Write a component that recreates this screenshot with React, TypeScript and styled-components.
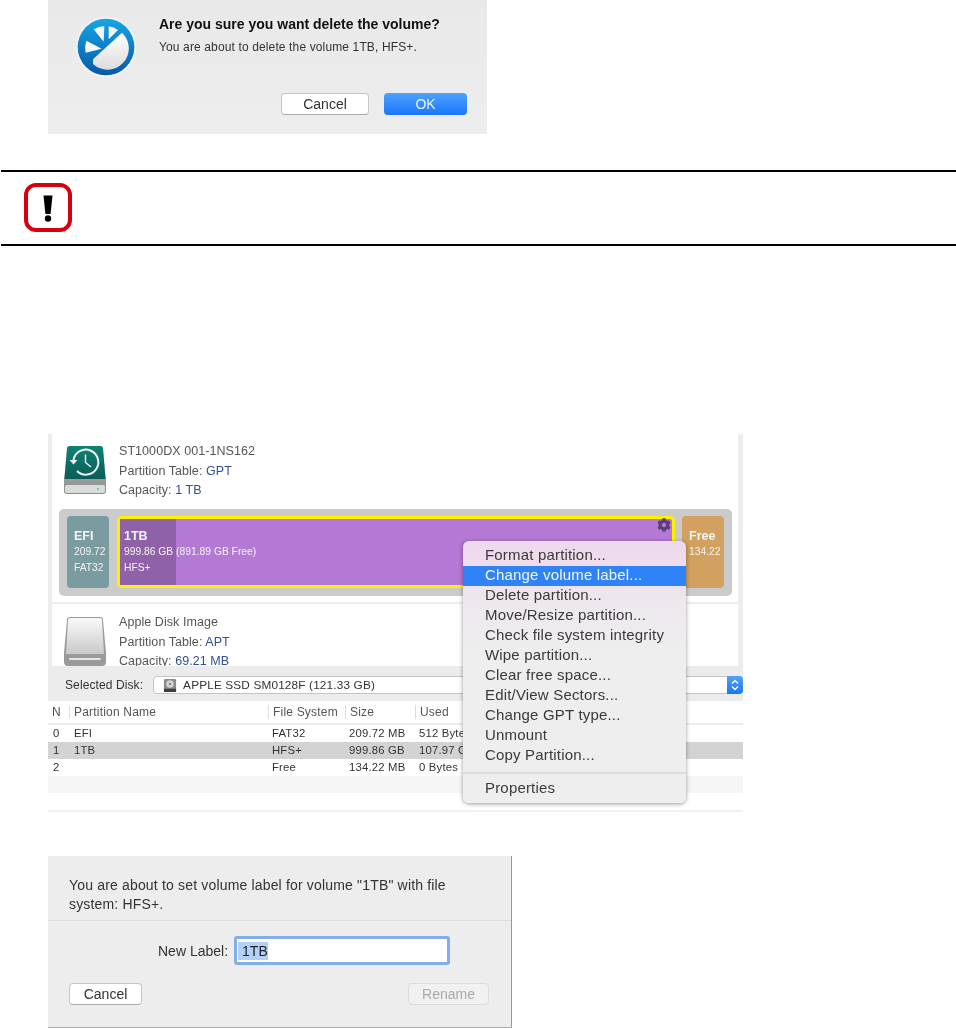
import React from "react";
import styled, { createGlobalStyle } from "styled-components";
import { FaCog } from "react-icons/fa";

const Global = createGlobalStyle`
  html, body { margin: 0; padding: 0; background: #fff; }
  body { font-family: "Liberation Sans", Arial, sans-serif; color: #222; }
`;

const soft = `filter: blur(0.35px);`;

const Page = styled.div`
  width: 956px;
  height: 1028px;
  overflow: hidden;
  background: #fff;
`;

const ConfirmDialog = styled.section`
  ${soft}
  margin-left: 48px;
  width: 439px;
  height: 134px;
  box-sizing: border-box;
  padding: 16px 20px 0 27px;
  background: linear-gradient(#e9e9e9, #ededed);
  display: flex;
  gap: 22px;
`;
const LogoSvg = styled.svg`
  width: 62px;
  height: 62px;
  flex: none;
`;
const ConfirmBody = styled.div`
  flex: 1;
  display: flex;
  flex-direction: column;
`;
const ConfirmTitle = styled.div`
  font-size: 14px;
  font-weight: 700;
  line-height: 16px;
  color: #111;
`;
const ConfirmText = styled.div`
  font-size: 12px;
  line-height: 14px;
  color: #333;
  margin-top: 8px;
  letter-spacing: 0.13px;
`;
const ButtonRow = styled.div`
  display: flex;
  justify-content: flex-end;
  gap: 15px;
  margin-top: 39px;
`;
const MacButton = styled.div<{ $w: number; $kind?: "primary" | "disabled" }>`
  width: ${(p) => p.$w}px;
  height: 22px;
  box-sizing: border-box;
  border-radius: 4px;
  display: flex;
  align-items: center;
  justify-content: center;
  font-size: 14px;
  ${(p) =>
    p.$kind === "primary"
      ? `background: linear-gradient(#4fa2fd, #1a76fb); color: #eaf3ff;`
      : p.$kind === "disabled"
      ? `background: #f1f1f1; color: #a9a9a9; border: 1px solid #dcdcdc;`
      : `background: #fff; color: #333; border: 1px solid #c6c6c6; border-bottom-color: #aaa;`}
`;

const Notice = styled.section`
  margin: 36px 0 0 1px;
  height: 76px;
  box-sizing: border-box;
  border-top: 2px solid #000;
  border-bottom: 2px solid #000;
  padding: 11px 0 0 23px;
`;
const WarningBox = styled.div`
  width: 48px;
  height: 49px;
  box-sizing: border-box;
  border: 4px solid #d8000f;
  border-radius: 12px;
  background: #fff;
  display: flex;
  align-items: center;
  justify-content: center;
`;

const Manager = styled.section`
  ${soft}
  position: relative;
  margin: 188px 0 0 48px;
  width: 695px;
  height: 378px;
  background: #ececec;
`;
const DiskArea = styled.div`
  height: 232px;
  box-sizing: border-box;
  padding: 0 5px 0 4px;
  background: #ededed;
  display: flex;
  flex-direction: column;
  gap: 2px;
  overflow: hidden;
`;
const DiskCard = styled.div<{ $h: number; $top: number }>`
  flex: none;
  height: ${(p) => p.$h}px;
  box-sizing: border-box;
  background: #fff;
  padding-top: ${(p) => p.$top}px;
  overflow: hidden;
`;
const DiskHead = styled.div`
  height: 67px;
  display: flex;
  gap: 12px;
  padding-left: 11px;
`;
const DiskIcon = styled.svg`
  width: 44px;
  height: 50px;
  flex: none;
  margin-top: 4px;
`;
const DiskInfo = styled.div`
  font-size: 12.5px;
  line-height: 19.5px;
  letter-spacing: 0.06px;
  color: #555;
`;
const Accent = styled.span`
  color: #35508f;
`;
const PartitionBar = styled.div`
  margin: 0 6px 0 7px;
  height: 87px;
  box-sizing: border-box;
  padding: 7px 8px 8px;
  background: #cbcbcb;
  border-radius: 5px;
  display: flex;
  gap: 8px;
`;
const Partition = styled.div<{ $w: number; $c: string }>`
  position: relative;
  flex: none;
  width: ${(p) => p.$w}px;
  height: 72px;
  box-sizing: border-box;
  background: ${(p) => p.$c};
  border-radius: 4px;
  padding: 12px 0 0 7px;
  color: #f4f4f4;
  overflow: hidden;
`;
const VolumeFrame = styled.div`
  position: relative;
  flex: none;
  width: 558px;
  height: 72px;
  box-sizing: border-box;
  border: 3px solid #fff000;
  border-radius: 5px;
  background: #b478d5;
  color: #f4f4f4;
  display: flex;
  margin-right: -1px;
`;
const UsedPart = styled.div`
  width: 56px;
  box-sizing: border-box;
  background: #8f61a9;
  padding: 9px 0 0 4px;
  white-space: nowrap;
`;
const PartName = styled.div`
  font-size: 12.5px;
  font-weight: 700;
  line-height: 16px;
`;
const PartMeta = styled.div`
  font-size: 10.3px;
  line-height: 16px;
  white-space: nowrap;
`;
const Gear = styled(FaCog)`
  position: absolute;
  top: -1px;
  right: 1px;
  width: 14px;
  height: 14px;
  color: #5b3d78;
`;

const Toolbar = styled.div`
  height: 35px;
  box-sizing: border-box;
  padding: 10px 0 0 17px;
  background: #ececec;
  display: flex;
  gap: 10px;
  font-size: 12px;
  color: #333;
`;
const ToolbarLabel = styled.span`
  line-height: 18px;
  letter-spacing: 0.1px;
`;
const Select = styled.div`
  flex: 1;
  height: 18px;
  box-sizing: border-box;
  background: #fff;
  border: 1px solid #c4c4c4;
  border-radius: 4px;
  display: flex;
  align-items: center;
  gap: 6px;
  padding-left: 9px;
  font-size: 11.8px;
  letter-spacing: 0.15px;
  color: #333;
`;
const SmallDisk = styled.svg`
  width: 14px;
  height: 15px;
  flex: none;
`;
const Stepper = styled.div`
  margin-left: auto;
  width: 16px;
  height: 18px;
  margin-right: -1px;
  border-radius: 0 4px 4px 0;
  background: linear-gradient(#4fa2fd, #1a76fb);
  display: flex;
  align-items: center;
  justify-content: center;
`;

const TableWrap = styled.div`
  background: #fff;
`;
const colGrid = `display: grid; grid-template-columns: 21px 199px 77px 70px 1fr;`;
const TableHead = styled.div`
  ${colGrid}
  height: 24px;
  box-sizing: border-box;
  background: #fff;
  border-bottom: 2px solid #ececec;
  font-size: 12px;
  letter-spacing: 0.2px;
  color: #555;
  align-items: center;
`;
const HeadCell = styled.div<{ $first?: boolean }>`
  height: 14px;
  line-height: 14px;
  padding-left: 4px;
  border-left: ${(p) => (p.$first ? "none" : "1px solid #dcdcdc")};
`;
const Row = styled.div<{ $tone?: "sel" | "alt" }>`
  ${colGrid}
  height: 17px;
  line-height: 17px;
  font-size: 11.3px;
  letter-spacing: 0.2px;
  color: #333;
  background: ${(p) => (p.$tone === "sel" ? "#d3d3d3" : p.$tone === "alt" ? "#f5f5f5" : "#fff")};
`;
const Cell = styled.div<{ $pad: number }>`
  padding-left: ${(p) => p.$pad}px;
  white-space: nowrap;
  overflow: hidden;
`;
const TableEnd = styled.div`
  height: 2px;
  background: #f0f0f0;
`;

const Menu = styled.div`
  position: absolute;
  left: 415px;
  top: 107px;
  width: 223px;
  height: 262px;
  box-sizing: border-box;
  padding: 5px 0;
  border-radius: 6px;
  background: linear-gradient(#eed9ec 0, #eedcec 24px, #eee8ee 60px, #eeeeee 110px);
  box-shadow: 0 1px 4px rgba(0, 0, 0, 0.4);
  font-size: 15px;
  letter-spacing: 0.18px;
  color: #3a3a3a;
`;
const MenuItem = styled.div<{ $active?: boolean }>`
  height: 20px;
  line-height: 18px;
  padding-left: 22px;
  white-space: nowrap;
  ${(p) => p.$active && `background: #2f83f7; color: #f2f7ff;`}
`;
const MenuDivider = styled.div`
  height: 2px;
  margin: 6px 0 5px;
  background: #dcdcdc;
`;

const RenameDialog = styled.section`
  ${soft}
  margin: 44px 0 0 48px;
  width: 464px;
  height: 172px;
  box-sizing: border-box;
  background: #ededed;
  border-right: 1px solid #999;
  border-bottom: 1px solid #aaa;
`;
const RenameTop = styled.div`
  height: 65px;
  box-sizing: border-box;
  padding: 20px 40px 0 21px;
  font-size: 14px;
  line-height: 19px;
  letter-spacing: 0.17px;
  color: #333;
  border-bottom: 1px solid #dcdcdc;
`;
const LabelRow = styled.div`
  display: flex;
  align-items: center;
  gap: 6px;
  margin-top: 15px;
  padding-left: 110px;
  font-size: 14px;
  color: #333;
`;
const FocusInput = styled.div`
  width: 216px;
  height: 29px;
  box-sizing: border-box;
  border: 3px solid #82aeee;
  border-radius: 3px;
  background: #fff;
  padding-left: 1px;
  display: flex;
  align-items: center;
`;
const Selected = styled.span`
  background: #b3d0f6;
  font-size: 14px;
  line-height: 18px;
  padding-left: 4px;
  color: #222;
`;
const RenameActions = styled.div`
  display: flex;
  justify-content: space-between;
  padding: 18px 22px 0 21px;
`;

const menuItems = [
  "Format partition...",
  "Change volume label...",
  "Delete partition...",
  "Move/Resize partition...",
  "Check file system integrity",
  "Wipe partition...",
  "Clear free space...",
  "Edit/View Sectors...",
  "Change GPT type...",
  "Unmount",
  "Copy Partition...",
];

const rows: { n: string; name: string; fs: string; size: string; used: string; tone?: "sel" | "alt" }[] = [
  { n: "0", name: "EFI", fs: "FAT32", size: "209.72 MB", used: "512 Bytes" },
  { n: "1", name: "1TB", fs: "HFS+", size: "999.86 GB", used: "107.97 GB", tone: "sel" },
  { n: "2", name: "", fs: "Free", size: "134.22 MB", used: "0 Bytes" },
  { n: "", name: "", fs: "", size: "", used: "", tone: "alt" },
  { n: "", name: "", fs: "", size: "", used: "" },
];

const Logo = () => (
  <LogoSvg viewBox="104 50 186 186">
    <defs>
      <linearGradient id="lg" x1="0" y1="0" x2="0" y2="1">
        <stop offset="0" stopColor="#16a6e6" />
        <stop offset="1" stopColor="#0558a8" />
      </linearGradient>
      <linearGradient id="lw" x1="0" y1="0" x2="0" y2="1">
        <stop offset="0" stopColor="#ffffff" />
        <stop offset="1" stopColor="#dcdcdc" />
      </linearGradient>
    </defs>
    <circle cx="197" cy="143" r="91" fill="#f2f2f2" />
    <circle cx="197" cy="143" r="85" fill="url(#lg)" />
    <path d="M158 180 L245 100 A64 64 0 0 1 158 194 Z" fill="url(#lw)" />
    <path d="M160 90 A64 64 0 0 1 192 80 L190 127 Z" fill="#f4f8fb" />
    <path d="M205 81 A64 64 0 0 1 233 92 L205 120 Z" fill="#f4f8fb" />
    <path d="M138 124 L184 148 L136 160 A64 64 0 0 1 138 124 Z" fill="#f4f8fb" />
  </LogoSvg>
);

const TimeMachineDisk = () => (
  <DiskIcon viewBox="0 0 44 50">
    <defs>
      <linearGradient id="tm" x1="0" y1="0" x2="0" y2="1">
        <stop offset="0" stopColor="#0f8273" />
        <stop offset="1" stopColor="#0a5d58" />
      </linearGradient>
      <linearGradient id="tb" x1="0" y1="0" x2="0" y2="1">
        <stop offset="0" stopColor="#b9b9b9" />
        <stop offset="1" stopColor="#8d8d8d" />
      </linearGradient>
    </defs>
    <path d="M4 3 Q4 0 7 0 H37 Q40 0 40 3 L43 34 Q43 36 43 38 V45 Q43 48 40 48 H4 Q1 48 1 45 V38 Q1 36 1 34 Z" fill="url(#tb)" />
    <path d="M4 3 Q4 0 7 0 H37 Q40 0 40 3 L42.5 33 H1.5 Z" fill="url(#tm)" />
    <rect x="2" y="39" width="40" height="8" rx="2" fill="#d8dcda" />
    <circle cx="35" cy="43" r="1" fill="#53c46a" />
    <path d="M10.5 14 A12.5 12.5 0 1 1 14 25" fill="none" stroke="#eef5f3" strokeWidth="2" />
    <path d="M6.5 14 L14.5 14 L10.5 18.5 Z" fill="#eef5f3" />
    <path d="M22.5 8.5 V16.5 L28 21" fill="none" stroke="#eef5f3" strokeWidth="1.4" />
  </DiskIcon>
);

const WhiteDisk = () => (
  <DiskIcon viewBox="0 0 44 50">
    <defs>
      <linearGradient id="wd" x1="0" y1="0" x2="0" y2="1">
        <stop offset="0" stopColor="#fafafa" />
        <stop offset="1" stopColor="#c9c9c9" />
      </linearGradient>
    </defs>
    <path d="M4 3 Q4 0 7 0 H37 Q40 0 40 3 L43 36 V45 Q43 49 39 49 H5 Q1 49 1 45 V36 Z" fill="#9a9a9a" />
    <path d="M5 3 Q5 1 7 1 H37 Q39 1 39 3 L41 37 H3 Z" fill="url(#wd)" />
    <rect x="6" y="41" width="32" height="2" rx="1" fill="#e6e6e6" />
  </DiskIcon>
);

const App = () => (
  <Page>
    <Global />
    <ConfirmDialog>
      <Logo />
      <ConfirmBody>
        <ConfirmTitle>Are you sure you want delete the volume?</ConfirmTitle>
        <ConfirmText>You are about to delete the volume 1TB, HFS+.</ConfirmText>
        <ButtonRow>
          <MacButton $w={88}>Cancel</MacButton>
          <MacButton $w={83} $kind="primary">OK</MacButton>
        </ButtonRow>
      </ConfirmBody>
    </ConfirmDialog>

    <Notice>
      <WarningBox>
        <svg width="12" height="30" viewBox="0 0 12 30">
          <path d="M1.5 2.5 H10.5 L8.6 21 H3.4 Z" fill="#000" />
          <circle cx="6" cy="25.5" r="3.2" fill="#000" />
        </svg>
      </WarningBox>
    </Notice>

    <Manager>
      <DiskArea>
        <DiskCard $h={168} $top={8}>
          <DiskHead>
            <TimeMachineDisk />
            <DiskInfo>
              ST1000DX 001-1NS162
              <br />
              Partition Table: <Accent>GPT</Accent>
              <br />
              Capacity: <Accent>1 TB</Accent>
            </DiskInfo>
          </DiskHead>
          <PartitionBar>
            <Partition $w={42} $c="#7a9b9f">
              <PartName>EFI</PartName>
              <PartMeta>209.72</PartMeta>
              <PartMeta>FAT32</PartMeta>
            </Partition>
            <VolumeFrame>
              <UsedPart>
                <PartName>1TB</PartName>
                <PartMeta>999.86 GB (891.89 GB Free)</PartMeta>
                <PartMeta>HFS+</PartMeta>
              </UsedPart>
              <Gear />
            </VolumeFrame>
            <Partition $w={42} $c="#d2a05f">
              <PartName>Free</PartName>
              <PartMeta>134.22</PartMeta>
            </Partition>
          </PartitionBar>
        </DiskCard>
        <DiskCard $h={62} $top={9}>
          <DiskHead>
            <WhiteDisk />
            <DiskInfo>
              Apple Disk Image
              <br />
              Partition Table: <Accent>APT</Accent>
              <br />
              Capacity: <Accent>69.21 MB</Accent>
            </DiskInfo>
          </DiskHead>
        </DiskCard>
      </DiskArea>

      <Toolbar>
        <ToolbarLabel>Selected Disk:</ToolbarLabel>
        <Select>
          <SmallDisk viewBox="0 0 15 15">
            <rect x="1" y="0.5" width="13" height="14" rx="1.5" fill="#8b8b8b" />
            <circle cx="7.5" cy="6" r="4" fill="#d4d4d4" />
            <circle cx="7.5" cy="6" r="1.2" fill="#777" />
            <rect x="1" y="11" width="13" height="3.5" fill="#3f3f3f" />
          </SmallDisk>
          APPLE SSD SM0128F (121.33 GB)
          <Stepper>
            <svg width="8" height="12" viewBox="0 0 8 12">
              <path d="M1 4.5 L4 1.5 L7 4.5 M1 7.5 L4 10.5 L7 7.5" fill="none" stroke="#fff" strokeWidth="1.4" />
            </svg>
          </Stepper>
        </Select>
      </Toolbar>

      <TableWrap>
        <TableHead>
          <HeadCell $first>N</HeadCell>
          <HeadCell>Partition Name</HeadCell>
          <HeadCell>File System</HeadCell>
          <HeadCell>Size</HeadCell>
          <HeadCell>Used</HeadCell>
        </TableHead>
        {rows.map((r, i) => (
          <Row key={i} $tone={r.tone}>
            <Cell $pad={5}>{r.n}</Cell>
            <Cell $pad={5}>{r.name}</Cell>
            <Cell $pad={4}>{r.fs}</Cell>
            <Cell $pad={4}>{r.size}</Cell>
            <Cell $pad={4}>{r.used}</Cell>
          </Row>
        ))}
        <TableEnd />
      </TableWrap>

      <Menu>
        {menuItems.map((m, i) => (
          <MenuItem key={m} $active={i === 1}>{m}</MenuItem>
        ))}
        <MenuDivider />
        <MenuItem>Properties</MenuItem>
      </Menu>
    </Manager>

    <RenameDialog>
      <RenameTop>
        You are about to set volume label for volume "1TB" with file system: HFS+.
      </RenameTop>
      <LabelRow>
        New Label:
        <FocusInput>
          <Selected>1TB</Selected>
        </FocusInput>
      </LabelRow>
      <RenameActions>
        <MacButton $w={73}>Cancel</MacButton>
        <MacButton $w={81} $kind="disabled">Rename</MacButton>
      </RenameActions>
    </RenameDialog>
  </Page>
);

export default App;
